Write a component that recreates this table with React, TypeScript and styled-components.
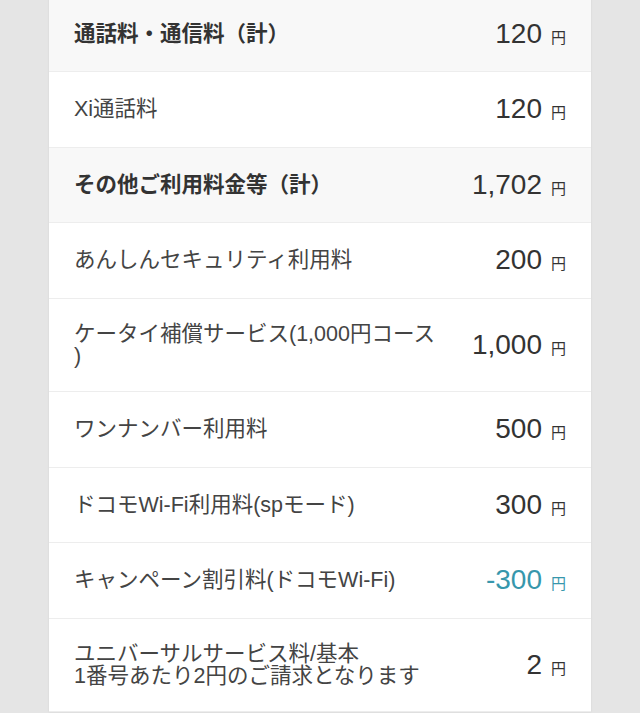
import React from "react";
import styled, { createGlobalStyle } from "styled-components";

const GlobalStyle = createGlobalStyle`
  html, body {
    margin: 0;
    padding: 0;
    background: #e5e5e5;
  }
  body {
    font-family: "Liberation Sans", "Noto Sans CJK JP", sans-serif;
    overflow: hidden;
  }
`;

const Page = styled.div`
  padding: 0 49px;
  height: 713px;
  overflow: hidden;
`;

const Card = styled.div`
  background: #ffffff;
  margin-top: -3.5px;
  box-shadow: 0 0 2px rgba(0, 0, 0, 0.08);
`;

const Row = styled.div<{ $header?: boolean }>`
  display: flex;
  align-items: center;
  padding: 24.25px 25px;
  background: ${(p) => (p.$header ? "#f8f8f8" : "#ffffff")};
  border-bottom: 1px solid #ededed;
`;

const Label = styled.div<{ $header?: boolean }>`
  flex: 1;
  min-width: 0;
  max-width: 364px;
  font-family: "Liberation Sans", "Noto Sans CJK JP", sans-serif;
  font-size: 21.5px;
  font-weight: ${(p) => (p.$header ? 700 : 400)};
  color: ${(p) => (p.$header ? "#333333" : "#444444")};
  line-height: 22px;
  line-break: anywhere;
`;

const Amount = styled.div<{ $minus?: boolean }>`
  flex: none;
  margin-left: auto;
  display: flex;
  align-items: baseline;
  color: ${(p) => (p.$minus ? "#3797ac" : "#333333")};
`;

const Value = styled.span`
  font-family: "Liberation Sans", "Noto Sans CJK JP", sans-serif;
  font-size: 28px;
  line-height: 26px;
`;

const Yen = styled.span`
  font-family: "Noto Sans CJK JP", sans-serif;
  font-size: 15px;
  line-height: 15px;
  margin-left: 9px;
`;

type Item = {
  label: React.ReactNode;
  value: string;
  header?: boolean;
  minus?: boolean;
};

const items: Item[] = [
  { label: "通話料・通信料（計）", value: "120", header: true },
  { label: "Xi通話料", value: "120" },
  { label: "その他ご利用料金等（計）", value: "1,702", header: true },
  { label: "あんしんセキュリティ利用料", value: "200" },
  { label: "ケータイ補償サービス(1,000円コース)", value: "1,000" },
  { label: "ワンナンバー利用料", value: "500" },
  { label: "ドコモWi-Fi利用料(spモード)", value: "300" },
  { label: "キャンペーン割引料(ドコモWi-Fi)", value: "-300", minus: true },
  {
    label: (
      <>
        ユニバーサルサービス料/基本
        <br />
        1番号あたり2円のご請求となります
      </>
    ),
    value: "2",
  },
];

export default function App() {
  return (
    <>
      <GlobalStyle />
      <Page>
        <Card>
          {items.map((it, i) => (
            <Row key={i} $header={it.header}>
              <Label $header={it.header}>{it.label}</Label>
              <Amount $minus={it.minus}>
                <Value>{it.value}</Value>
                <Yen>円</Yen>
              </Amount>
            </Row>
          ))}
        </Card>
      </Page>
    </>
  );
}
